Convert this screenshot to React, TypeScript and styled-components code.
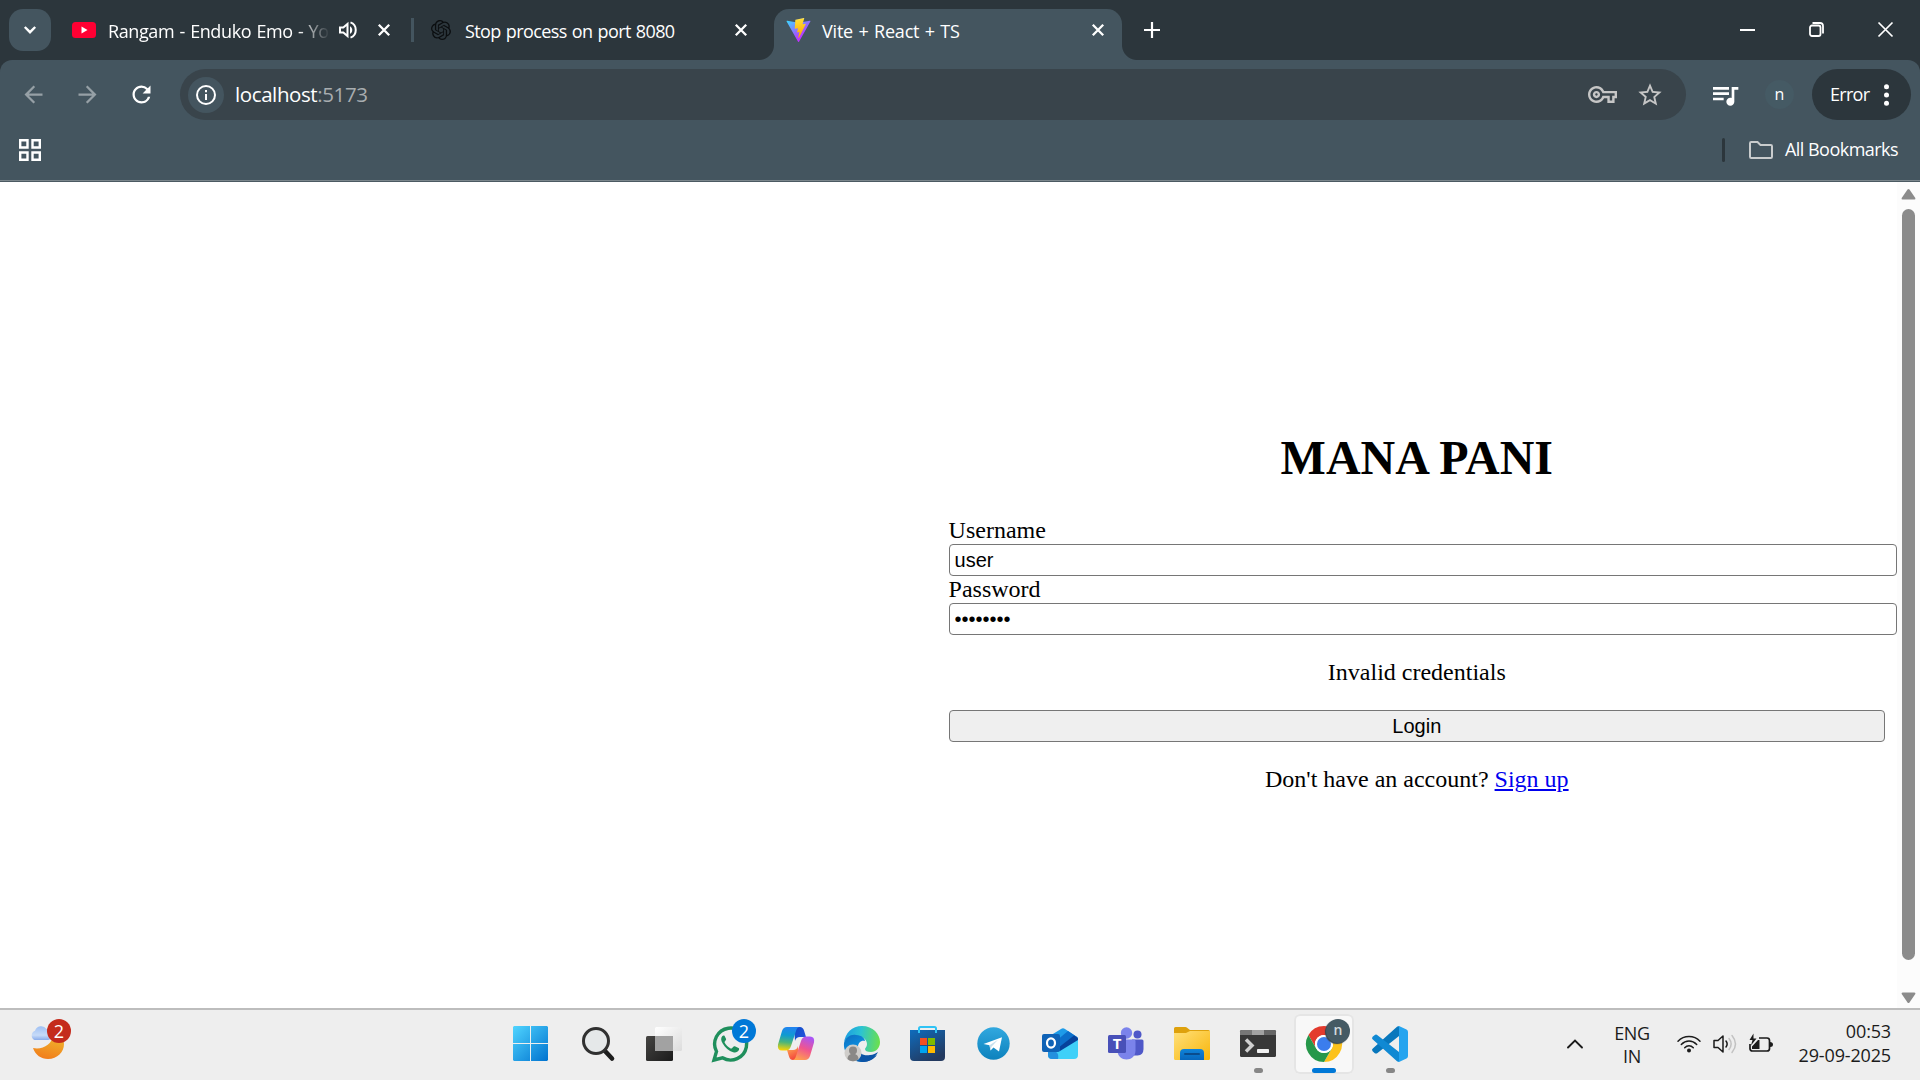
import React from 'react';
import styled, { createGlobalStyle, css } from 'styled-components';
import { SiOpenai } from 'react-icons/si';
import {
  MdArrowBack,
  MdArrowForward,
  MdRefresh,
  MdStarBorder,
  MdQueueMusic,
  MdOutlineVpnKey,
} from 'react-icons/md';

const colors = {
  frame: '#2c363c',
  toolbar: '#44555f',
  omnibox: '#39444b',
  taskbar: '#eeeeee',
};

const ui = '"Segoe UI", "Open Sans", "Noto Sans", sans-serif';

const GlobalStyle = createGlobalStyle`
  * { box-sizing: border-box; }
  body { margin: 0; overflow: hidden; background: #fff; }
  svg { display: block; flex: none; overflow: visible; }
`;

const Screen = styled.div`
  width: 1920px;
  height: 1080px;
  display: flex;
  flex-direction: column;
  overflow: hidden;
  font-family: ${ui};
  background: #fff;
`;

/* ---------- Tab strip ---------- */

const TabStrip = styled.header`
  height: 60px;
  flex: none;
  display: flex;
  align-items: flex-end;
  padding-left: 9px;
  background: ${colors.frame};
  color: #fff;
`;

const TabSearch = styled.button`
  width: 42px;
  height: 42px;
  margin: 0 9px 9px 0;
  padding: 0;
  border: 0;
  border-radius: 14px;
  display: grid;
  place-items: center;
  background: ${colors.toolbar};
`;

const Tab = styled.div<{ $width: number; $endPadding?: number; $active?: boolean }>`
  width: ${p => p.$width}px;
  height: 51px;
  display: flex;
  align-items: center;
  padding: 0 ${p => p.$endPadding ?? 18}px 9px 12px;
  position: relative;
  ${p =>
    p.$active &&
    css`
      background: ${colors.toolbar};
      border-radius: 15px 15px 0 0;
      &::before,
      &::after {
        content: '';
        position: absolute;
        bottom: 0;
        width: 15px;
        height: 15px;
      }
      &::before {
        left: -15px;
        background: radial-gradient(circle at 0 0, transparent 14.5px, ${colors.toolbar} 15.5px);
      }
      &::after {
        right: -15px;
        background: radial-gradient(circle at 100% 0, transparent 14.5px, ${colors.toolbar} 15.5px);
      }
    `}
`;

const Favicon = styled.span`
  width: 24px;
  height: 24px;
  margin-right: 12px;
  display: grid;
  place-items: center;
`;

const TabTitle = styled.span<{ $fade?: boolean; $spacing?: number }>`
  flex: 1;
  min-width: 0;
  padding-top: 1px;
  white-space: nowrap;
  font-size: 18px;
  line-height: 24px;
  letter-spacing: ${p => p.$spacing ?? 0}px;
  word-spacing: 1px;
  ${p =>
    p.$fade &&
    css`
      mask-image: linear-gradient(90deg, #000 190px, transparent 222px);
    `}
`;

const TabAudio = styled.span`
  width: 18px;
  margin: 0 21px 0 9px;
`;

const TabDivider = styled.span`
  width: 3px;
  height: 24px;
  margin: 0 3px 18px 3px;
  background: ${colors.toolbar};
`;

const NewTab = styled.span`
  margin: 0 auto 22px 22px;
`;

const WindowButtons = styled.div`
  height: 60px;
  display: flex;
`;

const WindowButton = styled.span`
  width: 69px;
  height: 59px;
  display: grid;
  place-items: center;
`;

/* ---------- Toolbar ---------- */

const ToolbarBack = styled.div`
  flex: none;
  background: ${colors.frame};
`;

const Toolbar = styled.div`
  height: 60px;
  display: flex;
  align-items: center;
  padding: 9px 9px 0 19.5px;
  border-radius: 12px 12px 0 0;
  background: ${colors.toolbar};
  color: #fff;
`;

const NavIcon = styled.span<{ $dim?: boolean }>`
  width: 54px;
  color: ${p => (p.$dim ? '#96a0a6' : '#fff')};
`;

const Omnibox = styled.div`
  width: 1506px;
  height: 51px;
  margin-left: -1.5px;
  padding: 0 22px 0 8px;
  display: flex;
  align-items: center;
  border-radius: 26px;
  background: ${colors.omnibox};
  color: #c6c6c6;
`;

const SiteInfo = styled.span`
  width: 36px;
  height: 36px;
  margin-right: 11px;
  border-radius: 50%;
  display: grid;
  place-items: center;
  background: ${colors.toolbar};
`;

const Address = styled.span`
  flex: 1;
  padding-bottom: 1px;
  font-size: 20.5px;
  line-height: 30px;
  letter-spacing: -0.4px;
  color: #a8adb0;
  b {
    font-weight: 400;
    color: #fff;
  }
`;

const KeySlot = styled.span`
  margin-right: 19px;
`;

const MediaSlot = styled.span`
  margin-left: 23px;
`;

const Avatar = styled.span`
  width: 29px;
  height: 29px;
  margin: 0 17px 0 24px;
  padding-bottom: 2px;
  border-radius: 50%;
  display: grid;
  place-items: center;
  background: #455a64;
  font-size: 16px;
  line-height: 20px;
`;

const ErrorPill = styled.div`
  width: 99px;
  height: 51px;
  margin-left: auto;
  padding: 0 22px 0 18px;
  display: flex;
  align-items: center;
  justify-content: space-between;
  border-radius: 26px;
  background: ${colors.frame};
  font-size: 18px;
  letter-spacing: -0.7px;
`;

const ErrorLabel = styled.span`
  padding-bottom: 1px;
`;

const BookmarkBar = styled.div`
  height: 62px;
  padding: 1px 21px 3px 19px;
  display: flex;
  align-items: center;
  background: ${colors.toolbar};
  border-bottom: 1px solid #4b5a62;
  box-shadow: inset 0 -1px 0 #7b868c;
  color: #fff;
  font-size: 18px;
`;

const BookmarkDivider = styled.span`
  width: 3px;
  height: 24px;
  margin: 0 24px 0 auto;
  border-radius: 2px;
  background: ${colors.frame};
`;

const BookmarkLabel = styled.span`
  width: 114px;
  margin-left: 12px;
  padding-bottom: 2px;
  white-space: nowrap;
  letter-spacing: -0.53px;
`;

/* ---------- Page ---------- */

const Page = styled.main`
  height: 826px;
  flex: none;
  display: flex;
  justify-content: flex-end;
  font-family: 'Times New Roman', 'Liberation Serif', serif;
  font-size: 24px;
  line-height: 27px;
  color: #000;
`;

const LoginForm = styled.form`
  width: 936.4px;
  margin-right: 12px;
  padding-top: 248px;
`;

const Title = styled.h1`
  margin: 0 0 32px;
  font-size: 48px;
  line-height: 55px;
  text-align: center;
`;

const FieldLabel = styled.label`
  display: block;
`;

const Field = styled.input`
  display: block;
  width: calc(100% + 12px);
  height: 32px;
  padding: 1px 5px;
  border: 1px solid #767676;
  border-radius: 4px;
  outline: 0;
  background: #fff;
  color: #000;
  font: 20px Arial, 'Liberation Sans', sans-serif;
`;

const Note = styled.p`
  margin: 24px 0;
  text-align: center;
  a {
    color: #0000ee;
    text-decoration: underline;
  }
`;

const LoginButton = styled.button`
  display: block;
  width: 100%;
  height: 32px;
  padding: 0;
  border: 1px solid #767676;
  border-radius: 4px;
  background: #efefef;
  color: #000;
  font: 20px Arial, 'Liberation Sans', sans-serif;
`;

const ScrollTrack = styled.div`
  width: 23px;
  padding: 6px 5px 4px 4px;
  display: flex;
  flex-direction: column;
  align-items: center;
  background: #fcfcfc;
`;

const ScrollThumb = styled.div`
  width: 13px;
  height: 751px;
  margin: 9px 0 auto;
  border-radius: 7px;
  background: #8b8b8b;
`;

/* ---------- Taskbar ---------- */

const Taskbar = styled.footer`
  height: 72px;
  flex: none;
  display: grid;
  grid-template-columns: 499px 924px 1fr;
  border-top: 2px solid #bdbdbd;
  background: ${colors.taskbar};
  color: #1b1b1b;
  font-size: 18px;
`;

const Weather = styled.div`
  padding: 8px 0 0 29px;
`;

const WeatherIcon = styled.div`
  width: 42px;
  height: 42px;
  position: relative;
`;

const Badge = styled.span<{ $color: string; $right: number; $top: number }>`
  position: absolute;
  right: ${p => p.$right}px;
  top: ${p => p.$top}px;
  width: 24px;
  height: 24px;
  border-radius: 50%;
  display: grid;
  place-items: center;
  background: ${p => p.$color};
  color: #fff;
  font-size: 18px;
  line-height: 24px;
`;

const Apps = styled.nav`
  display: flex;
`;

const AppButton = styled.div<{ $active?: boolean; $nudge?: number }>`
  width: 60px;
  height: 60px;
  margin: 4px 3px 0;
  padding: 0 ${p => p.$nudge ?? 0}px 1px 0;
  display: grid;
  place-items: center;
  position: relative;
  ${p =>
    p.$active &&
    css`
      border-radius: 6px;
      background: #f8f8f8;
      box-shadow: inset 0 0 0 2px #e5e5e5;
    `}
`;

const Running = styled.span<{ $active?: boolean }>`
  position: absolute;
  left: ${p => (p.$active ? 18 : 26)}px;
  top: 54px;
  width: ${p => (p.$active ? 24 : 9)}px;
  height: 5px;
  border-radius: 3px;
  background: ${p => (p.$active ? '#0078d7' : '#868686')};
`;

const Tray = styled.div`
  display: flex;
  align-items: center;
  padding: 0 29px 2px 144px;
  white-space: nowrap;
`;

const Language = styled.div`
  width: 36px;
  margin: 0 27px 0 31px;
  padding-top: 1px;
  text-align: center;
  line-height: 23px;
  letter-spacing: -0.4px;
`;

const StatusIcons = styled.div`
  display: flex;
  align-items: center;
  gap: 12px;
`;

const Clock = styled.div`
  margin-left: auto;
  padding-bottom: 2px;
  text-align: right;
  line-height: 24px;
  letter-spacing: -0.15px;
`;

/* ---------- Drawings ---------- */

const CloseGlyph = () => (
  <svg width="12" height="12" viewBox="0 0 12 12" stroke="#fff" strokeWidth="2.3">
    <path d="M.8.8l10.4 10.4M11.2.8L.8 11.2" />
  </svg>
);

const YoutubeIcon = () => (
  <svg width="24" height="16" viewBox="0 0 24 16">
    <rect width="24" height="16" rx="3.5" fill="#ff0033" />
    <path d="M9.5 4.6v6.8l6-3.4z" fill="#fff" />
  </svg>
);

const SpeakerIcon = () => (
  <svg width="18" height="18" viewBox="0 0 18 18" fill="none" stroke="#fff" strokeWidth="2">
    <path d="M1 6.5v5h3.3L8.500 15V3L4.3 6.5z" />
    <path d="M11 5.2v7.6c3-1.5 3-6 0-7.6z" fill="#fff" stroke="none" />
    <path d="M11.5 1.4c7 2.4 7 12.800 0 15.200" />
  </svg>
);

const ViteIcon = () => (
  <svg width="25" height="24" viewBox="0 0 256 257">
    <defs>
      <linearGradient id="viteA" x1="0" y1="8%" x2="58%" y2="80%">
        <stop offset="0" stopColor="#41d1ff" />
        <stop offset="1" stopColor="#bd34fe" />
      </linearGradient>
      <linearGradient id="viteB" x1="43%" y1="2%" x2="50%" y2="89%">
        <stop offset="0" stopColor="#ffea83" />
        <stop offset=".083" stopColor="#ffdd35" />
        <stop offset="1" stopColor="#ffa800" />
      </linearGradient>
    </defs>
    <path
      fill="url(#viteA)"
      d="M255.153 37.938L134.897 252.976c-2.483 4.44-8.862 4.466-11.382.048L.875 37.958c-2.746-4.814 1.371-10.646 6.827-9.67l120.385 21.517a6.537 6.537 0 0 0 2.322-.004l117.867-21.483c5.438-.991 9.574 4.796 6.877 9.620Z"
    />
    <path
      fill="url(#viteB)"
      d="M185.432.063L96.440 17.501a3.268 3.268 0 0 0-2.634 3.014l-5.474 92.456a3.268 3.268 0 0 0 3.997 3.378l24.777-5.718c2.318-.535 4.413 1.507 3.936 3.838l-7.361 36.047c-.495 2.426 1.782 4.500 4.151 3.780l15.304-4.649c2.372-.720 4.652 1.360 4.150 3.788l-11.698 56.621c-.732 3.542 3.979 5.473 5.943 2.437l1.313-2.028l72.516-144.720c1.215-2.423-.880-5.186-3.540-4.672l-25.505 4.922c-2.396.462-4.435-1.770-3.759-4.114l16.646-57.705c.677-2.350-1.370-4.583-3.769-4.113Z"
    />
  </svg>
);

const InfoIcon = () => (
  <svg width="20" height="20" viewBox="0 0 20 20" fill="none" stroke="#fff" strokeWidth="2">
    <circle cx="10" cy="10" r="9" />
    <path d="M10 9v6M10 5v2.2" />
  </svg>
);

const AppsGridIcon = () => (
  <svg width="22" height="22" viewBox="0 0 22 22" fill="none" stroke="#fff" strokeWidth="2.4">
    <path d="M1.200 1.200h7.300v7.300H1.200zM13.500 1.200h7.300v7.300h-7.300zM1.200 13.500h7.300v7.300H1.200zM13.500 13.500h7.300v7.300h-7.300z" />
  </svg>
);

const FolderOutline = () => (
  <svg width="24" height="18" viewBox="0 0 24 18" fill="none" stroke="#c9cccd" strokeWidth="2">
    <path d="M1 2.200Q1 1 2.200 1h6.300l3 3h10.300Q23 4 23 5.200v10.600Q23 17 21.800 17H2.200Q1 17 1 15.800z" />
  </svg>
);

const WeatherDrawing = () => (
  <svg width="42" height="42" viewBox="0 0 42 42">
    <defs>
      <linearGradient id="moon" x1=".7" y1="0" x2=".4" y2="1">
        <stop offset="0" stopColor="#f0b92e" />
        <stop offset="1" stopColor="#f17d1b" />
      </linearGradient>
      <linearGradient id="cloud" x1="0" y1="0" x2="0" y2="1">
        <stop offset="0" stopColor="#9fc0f3" />
        <stop offset=".65" stopColor="#c7dbf8" />
        <stop offset="1" stopColor="#89aceb" />
      </linearGradient>
    </defs>
    <path d="M24 18c-1 8-10 14-20 12 2.500 7 8 11 15 11 9.500 0 16-7 16-15 0-5-4-10-11-10z" fill="url(#moon)" />
    <path d="M5.500 22A5 5 0 0 1 6 12.800 6.500 6.500 0 0 1 17.500 11c3 .500 5.500 3 5.500 6s-2 5-5 5z" fill="url(#cloud)" />
  </svg>
);

const WindowsIcon = () => (
  <svg width="35" height="35" viewBox="0 0 35 35">
    <defs>
      <linearGradient id="win" x2="1" y2="1">
        <stop stopColor="#50d5ff" />
        <stop offset="1" stopColor="#0072cf" />
      </linearGradient>
    </defs>
    <path fill="url(#win)" d="M1 0h16v17H0V1zM18 0h16l1 1v16H18zM0 18h17v17H1l-1-1zM18 18h17v16l-1 1H18z" />
  </svg>
);

const SearchIcon = () => (
  <svg width="32" height="34" viewBox="0 0 32 34" fill="none">
    <path d="M23 24l7 7.500" stroke="#1d1d1d" strokeWidth="4.600" strokeLinecap="round" />
    <circle cx="14" cy="14" r="12.500" fill="#e1e5e7" fillOpacity=".75" stroke="#303030" strokeWidth="3" />
  </svg>
);

const TaskViewIcon = () => (
  <svg width="36" height="34" viewBox="0 0 36 34">
    <defs>
      <linearGradient id="tv" x2="1" y2="1">
        <stop stopColor="#454442" />
        <stop offset="1" stopColor="#1b1b1b" />
      </linearGradient>
      <linearGradient id="tvFront" x2="1" y2="1">
        <stop stopColor="#fff" />
        <stop offset="1" stopColor="#dcdcdc" />
      </linearGradient>
    </defs>
    <rect y="9" width="27" height="25" rx="1.500" fill="url(#tv)" />
    <rect x="9" y="0" width="27" height="24" rx="1.500" fill="url(#tvFront)" />
    <path d="M9 9h18v15H9z" fill="#a2a2a2" />
  </svg>
);

const WhatsappIcon = () => (
  <svg width="36" height="36" viewBox="0 0 36 36">
    <path d="M2 34l2.500-8.500A16 16 0 1 1 10.500 31.800z" fill="none" stroke="#1f8f5c" strokeWidth="3.400" />
    <path
      d="M12.500 9.800c-.6-.6-1.500-.5-2.100.1-1.700 1.700-1.700 4.400.3 7.500 2.500 4.200 6 7.400 10.500 8.900 2.500.7 4.700-.2 5.700-2.200.4-.9.300-1.600-.4-2l-3.600-1.800c-.6-.3-1.200-.1-1.600.4l-1.300 1.500c-.4.400-.9.400-1.400.2-2.600-1.300-4.500-3.200-5.900-5.700-.2-.4-.2-.8.100-1.200l1.100-1.400c.3-.4.300-.9.100-1.400z"
      fill="#1f8f5c"
    />
  </svg>
);

const CopilotIcon = () => (
  <svg width="36" height="34" viewBox="0 0 36 34">
    <defs>
      <linearGradient id="cpA" x1=".4" y1="0" x2=".3" y2="1">
        <stop stopColor="#2183f0" />
        <stop offset=".35" stopColor="#0f9bd0" />
        <stop offset=".65" stopColor="#4bb57b" />
        <stop offset="1" stopColor="#ffd400" />
      </linearGradient>
      <linearGradient id="cpB" x1=".7" y1="0" x2=".3" y2="1">
        <stop stopColor="#a955f6" />
        <stop offset=".5" stopColor="#f0568e" />
        <stop offset="1" stopColor="#ffa24c" />
      </linearGradient>
      <linearGradient id="cpC" x2="1" y2=".6">
        <stop stopColor="#0d4fc4" />
        <stop offset="1" stopColor="#2452dc" />
      </linearGradient>
      <linearGradient id="cpD" x2=".4" y2="1">
        <stop stopColor="#ffb657" />
        <stop offset="1" stopColor="#f4493d" />
      </linearGradient>
    </defs>
    <path d="M16 0h6q3 0 4 3.500L28 10h-6q-4 0-5 4z" fill="url(#cpC)" />
    <path d="M20 33h-5q-3 0-4-3.500L9 23h6q4 0 5-4z" fill="url(#cpD)" />
    <path d="M9 0h13q-3 0-4 4l-5 15q-1.500 4.500-5 4.500H4q-5 0-4-6L4 4Q5.300 0 9 0z" fill="url(#cpA)" />
    <path d="M27 33H14q3 0 4-4l5-15q1.500-4.500 5-4.500h4q5 0 4 6L32 29q-1.300 4-5 4z" fill="url(#cpB)" />
  </svg>
);

const EdgeIcon = () => (
  <svg width="36" height="36" viewBox="0 0 36 36">
    <defs>
      <linearGradient id="edA" x1="0" y1=".4" x2="1" y2=".5">
        <stop stopColor="#1b9de2" />
        <stop offset=".45" stopColor="#2cc3d2" />
        <stop offset="1" stopColor="#6be04d" />
      </linearGradient>
      <linearGradient id="edB" x1="0" y1="0" x2=".7" y2="1">
        <stop stopColor="#0f6cbd" />
        <stop offset=".5" stopColor="#0b8fe0" />
        <stop offset="1" stopColor="#0a4ea0" />
      </linearGradient>
    </defs>
    <path d="M0 17C1 7 8 0 18 0c11 0 18 8 18 16 0 6-4 10-9 10-4 0-6-1-6-3 0-1 2-2 2-5 0-4-4-8-10-8C6 10 1 13 0 17z" fill="url(#edA)" />
    <path d="M0 17c2-6 7-9 12-8 6 0 9 4 9 6-4-1-7 2-7 6 0 7 6 11 13 10 2 0 4-1 6-2-3 4-8 7-14 7C8 36-1 28 0 17z" fill="url(#edB)" />
    <path d="M14 21c0 7 6 9 12 8 3 0 6-2 8-3-3 6-9 10-15 10-6-3-8-9-5-15z" fill="#0b54a6" />
    <circle cx="9" cy="27" r="8.500" fill="#cfcdca" />
    <circle cx="9" cy="24.500" r="4" fill="#8a8886" />
    <path d="M3.500 33c0-7 11-7 11 0-3 3-8 3-11 0z" fill="#8a8886" />
  </svg>
);

const StoreIcon = () => (
  <svg width="35" height="35" viewBox="0 0 35 35">
    <defs>
      <linearGradient id="st" x2=".6" y2="1">
        <stop stopColor="#0f6cbd" />
        <stop offset="1" stopColor="#23395f" />
      </linearGradient>
    </defs>
    <path d="M0 4h35v27q0 4-4 4H4q-4 0-4-4z" fill="url(#st)" />
    <path d="M9 7V2.500Q9 1 10.500 1h14Q26 1 26 2.500V7" fill="none" stroke="#2fc3f5" strokeWidth="2" />
    <path d="M10 12h7v7h-7z" fill="#f25022" />
    <path d="M18 12h7v7h-7z" fill="#7fba00" />
    <path d="M10 20h7v7h-7z" fill="#00a4ef" />
    <path d="M18 20h7v7h-7z" fill="#ffb900" />
  </svg>
);

const TelegramIcon = () => (
  <svg width="33" height="33" viewBox="0 0 33 33">
    <defs>
      <linearGradient id="tg" x2="0" y2="1">
        <stop stopColor="#31a8df" />
        <stop offset="1" stopColor="#0d82bd" />
      </linearGradient>
    </defs>
    <circle cx="16.500" cy="16.500" r="16.200" fill="url(#tg)" />
    <path d="M6.500 17L25 10.200l-3 14.300-5.500-3.900-3 3-1-5.300z" fill="#fff" />
    <path d="M12.500 18.300l8.500-5.500-6.500 7-1 3.800z" fill="#c5e0ee" />
  </svg>
);

const LogoLetter = styled.text`
  font: 700 15px ${ui};
  fill: #fff;
  text-anchor: middle;
`;

const OutlookIcon = () => (
  <svg width="36" height="31" viewBox="0 0 36 31">
    <path d="M6 9L19 1q2-1.500 4 0l12 8q1 .6 1 2L22 22 6 20z" fill="#1e9be8" />
    <path d="M14 13L26 3l9 6q1 1 1 2L18 22z" fill="#0c6fca" />
    <path d="M16 20l16-12.500q3 1.500 4 3V14L18 25z" fill="#06429b" />
    <path d="M6 17l12 6 18-11v15q0 4-4 4H10q-4 0-4-4z" fill="#3fd0f8" />
    <path d="M6 22q12 0 10 9h-6q-4 0-4-4z" fill="#2390df" />
    <rect y="6" width="18" height="18" rx="2" fill="#0f62b6" />
    <ellipse cx="9" cy="15" rx="4" ry="4.700" fill="none" stroke="#fff" strokeWidth="2.200" />
  </svg>
);

const TeamsIcon = () => (
  <svg width="36" height="33" viewBox="0 0 36 33">
    <circle cx="29.500" cy="7.500" r="4" fill="#4f58c8" />
    <path d="M24 12.500h10q1.500 0 1.500 1.500v8q0 6-6 6.500H24z" fill="#4f58c8" />
    <circle cx="18.500" cy="6" r="5.700" fill="#7b83eb" />
    <path d="M10 12.500h16q1.500 0 1.500 1.500v9.500c0 12-18 12-18 0z" fill="#7b83eb" />
    <rect y="8" width="18" height="18" rx="1.500" fill="#4850b8" />
    <LogoLetter x="9" y="22">T</LogoLetter>
  </svg>
);

const ExplorerIcon = () => (
  <svg width="36" height="33" viewBox="0 0 36 33">
    <defs>
      <linearGradient id="ex" x2="1" y2="1">
        <stop stopColor="#ffe07a" />
        <stop offset="1" stopColor="#f8b50a" />
      </linearGradient>
      <linearGradient id="exBase" x2="0" y2="1">
        <stop stopColor="#0f83d9" />
        <stop offset="1" stopColor="#0767bd" />
      </linearGradient>
    </defs>
    <path d="M0 1.500Q0 0 1.500 0h10q1.500 0 2.500 1.500L16 3h18.500Q36 3 36 4.500V8H0z" fill="#dea10c" />
    <path d="M0 6h12l4-2h20v27.500q0 1.500-1.500 1.500h-33Q0 33 0 31.500z" fill="url(#ex)" />
    <path d="M6 33v-7q0-4 4-4h16q4 0 4 4v7z" fill="url(#exBase)" />
    <path d="M11 27h14" stroke="#0a4c8d" strokeWidth="2" strokeLinecap="round" />
  </svg>
);

const TerminalIcon = () => (
  <svg width="36" height="27" viewBox="0 0 36 27">
    <rect width="36" height="27" rx="1.500" fill="#383838" />
    <path d="M0 1.500Q0 0 1.500 0H12v5H0z" fill="#777" />
    <path d="M12 0h12v5H12z" fill="#a2a2a2" />
    <path d="M24 0h10.500Q36 0 36 1.500V5H24z" fill="#666" />
    <path d="M6 9.500l6 6-6 6" fill="none" stroke="#d0d0d0" strokeWidth="3.500" />
    <rect x="17" y="19" width="12" height="4" rx=".8" fill="#f1f1f1" />
  </svg>
);

const ChromeIcon = () => (
  <svg width="36" height="36" viewBox="0 0 36 36">
    <circle cx="18" cy="18" r="18" fill="#fff" />
    <path d="M2.410 9A18 18 0 0 1 33.590 9H18A9 9 0 0 0 10.200 22.500z" fill="#e33b2e" />
    <path d="M33.590 9A18 18 0 0 1 18 36l7.800-13.500A9 9 0 0 0 18 9z" fill="#fcc21b" />
    <path d="M18 36A18 18 0 0 1 2.410 9l7.790 13.500a9 9 0 0 0 15.600 0z" fill="#26974a" />
    <circle cx="18" cy="18" r="9" fill="#fff" />
    <circle cx="18" cy="18" r="7" fill="#3b7ded" />
  </svg>
);

const ProfileBadge = styled.span`
  position: absolute;
  left: 32px;
  top: 5px;
  width: 24px;
  height: 24px;
  border-radius: 50%;
  box-shadow: -1px 1px 1px #34454e;
  background: #455a64;
  color: #d3dadd;
  font-size: 14px;
  font-weight: 600;
  line-height: 22px;
  text-align: center;
`;

const VsCodeIcon = () => (
  <svg width="36" height="36" viewBox="0 0 36 36">
    <path d="M27 0v10L5.500 27q-1.500 1.200-3 0L.600 25.300q-1.300-1.500.200-2.800L25 .800z" fill="#0877bc" />
    <path d="M27 36V26L5.500 9.200q-1.500-1.200-3 0L.600 10.700q-1.300 1.500.200 2.800L25 35.200z" fill="#1089d3" />
    <path d="M27 0l7.500 3.500Q36 4.200 36 6v24q0 1.700-1.500 2.500L27 36q-.7 0-2-1 2 1 2-1V2q0-2-2-1z" fill="#25a4ef" />
  </svg>
);

const WifiIcon = () => (
  <svg width="24" height="18" viewBox="0 0 24 18" fill="none" stroke="#1b1b1b" strokeWidth="1.500" strokeLinecap="round">
    <path d="M1 6.200c6-6.200 16-6.200 22 0M4.300 9.500c4.500-4.600 10.900-4.600 15.400 0M7.700 12.700c2.500-2.700 6.100-2.700 8.600 0" />
    <circle cx="12" cy="15.500" r="2" fill="#1b1b1b" stroke="none" />
  </svg>
);

const VolumeIcon = () => (
  <svg width="24" height="20" viewBox="0 0 24 20" fill="none" stroke="#1b1b1b" strokeWidth="1.500" strokeLinecap="round" strokeLinejoin="round">
    <path d="M1 6.500v7h4l5 4.500V2L5 6.500zM13 7q2.300 3 0 6" />
    <path d="M16 4.500q4.300 5.500 0 11M19 1.500q7 8.500 0 17" stroke="#c2c2c2" />
  </svg>
);

const BatteryIcon = () => (
  <svg width="24" height="20" viewBox="0 0 24 20">
    <path d="M10 4h8q2.500 0 2.500 2.500v8Q20.500 17 18 17H3.500Q1 17 1 14.500V10" fill="none" stroke="#1b1b1b" strokeWidth="1.700" />
    <path d="M21 8q3 0 3 2.500T21 13zM3 15v-2.500L9 6h1.500v9z" fill="#1b1b1b" />
    <path d="M4.500-.500L.500 6h3L2 11.500 7.500 4.500h-3z" fill="#1b1b1b" />
  </svg>
);

/* ---------- Composition ---------- */

const BrowserTabs = () => (
  <TabStrip>
    <TabSearch aria-label="Search tabs">
      <svg width="12" height="8" viewBox="0 0 12 8" fill="none" stroke="#fff" strokeWidth="2.400">
        <path d="M.8 1L6 6.200 11.200 1" />
      </svg>
    </TabSearch>
    <Tab $width={348}>
      <Favicon><YoutubeIcon /></Favicon>
      <TabTitle $fade $spacing={-0.4}>Rangam - Enduko Emo - You</TabTitle>
      <TabAudio><SpeakerIcon /></TabAudio>
      <CloseGlyph />
    </Tab>
    <TabDivider />
    <Tab $width={357} $endPadding={27}>
      <Favicon><SiOpenai size={20} color="#0b0e10" /></Favicon>
      <TabTitle $spacing={-0.6}>Stop process on port 8080</TabTitle>
      <CloseGlyph />
    </Tab>
    <Tab $width={348} $active>
      <Favicon><ViteIcon /></Favicon>
      <TabTitle $spacing={-0.2}>Vite + React + TS</TabTitle>
      <CloseGlyph />
    </Tab>
    <NewTab>
      <svg width="16" height="16" viewBox="0 0 16 16" stroke="#fff" strokeWidth="2.200">
        <path d="M8 0v16M0 8h16" />
      </svg>
    </NewTab>
    <WindowButtons>
      <WindowButton>
        <svg width="15" height="2"><path d="M0 0h15v2H0z" fill="#fff" /></svg>
      </WindowButton>
      <WindowButton>
        <svg width="15" height="15" viewBox="0 0 15 15" fill="none" stroke="#fff" strokeWidth="1.800">
          <rect x="1" y="3.500" width="10.500" height="10.500" rx="2" />
          <path d="M3.500 1H11q3 0 3 3v7.500" />
        </svg>
      </WindowButton>
      <WindowButton>
        <svg width="15" height="15" viewBox="0 0 15 15" stroke="#fff" strokeWidth="1.700">
          <path d="M.5.5l14 14M14.500.5l-14 14" />
        </svg>
      </WindowButton>
    </WindowButtons>
  </TabStrip>
);

const BrowserToolbar = () => (
  <ToolbarBack>
    <Toolbar>
      <NavIcon $dim><MdArrowBack size={27} /></NavIcon>
      <NavIcon $dim><MdArrowForward size={27} /></NavIcon>
      <NavIcon><MdRefresh size={27} /></NavIcon>
      <Omnibox>
        <SiteInfo><InfoIcon /></SiteInfo>
        <Address><b>localhost</b>:5173</Address>
        <KeySlot><MdOutlineVpnKey size={29} /></KeySlot>
        <MdStarBorder size={28} />
      </Omnibox>
      <MediaSlot><MdQueueMusic size={32} /></MediaSlot>
      <Avatar>n</Avatar>
      <ErrorPill>
        <ErrorLabel>Error</ErrorLabel>
        <svg width="5" height="22" viewBox="0 0 5 22" fill="#fff">
          <circle cx="2.500" cy="2.700" r="2.500" />
          <circle cx="2.500" cy="11" r="2.500" />
          <circle cx="2.500" cy="19.300" r="2.500" />
        </svg>
      </ErrorPill>
    </Toolbar>
    <BookmarkBar>
      <AppsGridIcon />
      <BookmarkDivider />
      <FolderOutline />
      <BookmarkLabel>All Bookmarks</BookmarkLabel>
    </BookmarkBar>
  </ToolbarBack>
);

const LoginPage = () => (
  <Page>
    <LoginForm onSubmit={e => e.preventDefault()}>
      <Title>MANA PANI</Title>
      <FieldLabel htmlFor="username">Username</FieldLabel>
      <Field id="username" defaultValue="user" />
      <FieldLabel htmlFor="password">Password</FieldLabel>
      <Field id="password" type="password" defaultValue="password" />
      <Note>Invalid credentials</Note>
      <LoginButton type="submit">Login</LoginButton>
      <Note>
        Don't have an account? <a href="#signup">Sign up</a>
      </Note>
    </LoginForm>
    <ScrollTrack>
      <svg width="15" height="12" viewBox="0 0 15 12" fill="#8b8b8b">
        <path d="M6.500 1.500q1-1.200 2 0L14.300 10q.6 1.500-1 1.500H1.700q-1.600 0-1-1.500z" />
      </svg>
      <ScrollThumb />
      <svg width="15" height="12" viewBox="0 0 15 12" fill="#8b8b8b">
        <path d="M6.500 10.500q1 1.200 2 0L14.300 2q.6-1.500-1-1.500H1.700Q.1.500.7 2z" />
      </svg>
    </ScrollTrack>
  </Page>
);

const WindowsTaskbar = () => (
  <Taskbar>
    <Weather>
      <WeatherIcon>
        <WeatherDrawing />
        <Badge $color="#c42b1c" $right={0} $top={1}>2</Badge>
      </WeatherIcon>
    </Weather>
    <Apps>
      <AppButton $nudge={3}><WindowsIcon /></AppButton>
      <AppButton><SearchIcon /></AppButton>
      <AppButton><TaskViewIcon /></AppButton>
      <AppButton>
        <WhatsappIcon />
        <Badge $color="#0078d7" $right={4} $top={5}>2</Badge>
      </AppButton>
      <AppButton><CopilotIcon /></AppButton>
      <AppButton><EdgeIcon /></AppButton>
      <AppButton $nudge={1}><StoreIcon /></AppButton>
      <AppButton $nudge={1}><TelegramIcon /></AppButton>
      <AppButton><OutlookIcon /></AppButton>
      <AppButton><TeamsIcon /></AppButton>
      <AppButton><ExplorerIcon /></AppButton>
      <AppButton><TerminalIcon /><Running /></AppButton>
      <AppButton $active>
        <ChromeIcon />
        <ProfileBadge>n</ProfileBadge>
        <Running $active />
      </AppButton>
      <AppButton><VsCodeIcon /><Running /></AppButton>
    </Apps>
    <Tray>
      <svg width="16" height="10" viewBox="0 0 16 10" fill="none" stroke="#1b1b1b" strokeWidth="1.900" strokeLinecap="round">
        <path d="M1 8.500l7-7 7 7" />
      </svg>
      <Language>ENG<br />IN</Language>
      <StatusIcons>
        <WifiIcon />
        <VolumeIcon />
        <BatteryIcon />
      </StatusIcons>
      <Clock>00:53<br />29-09-2025</Clock>
    </Tray>
  </Taskbar>
);

export default function App() {
  return (
    <Screen>
      <GlobalStyle />
      <BrowserTabs />
      <BrowserToolbar />
      <LoginPage />
      <WindowsTaskbar />
    </Screen>
  );
}
